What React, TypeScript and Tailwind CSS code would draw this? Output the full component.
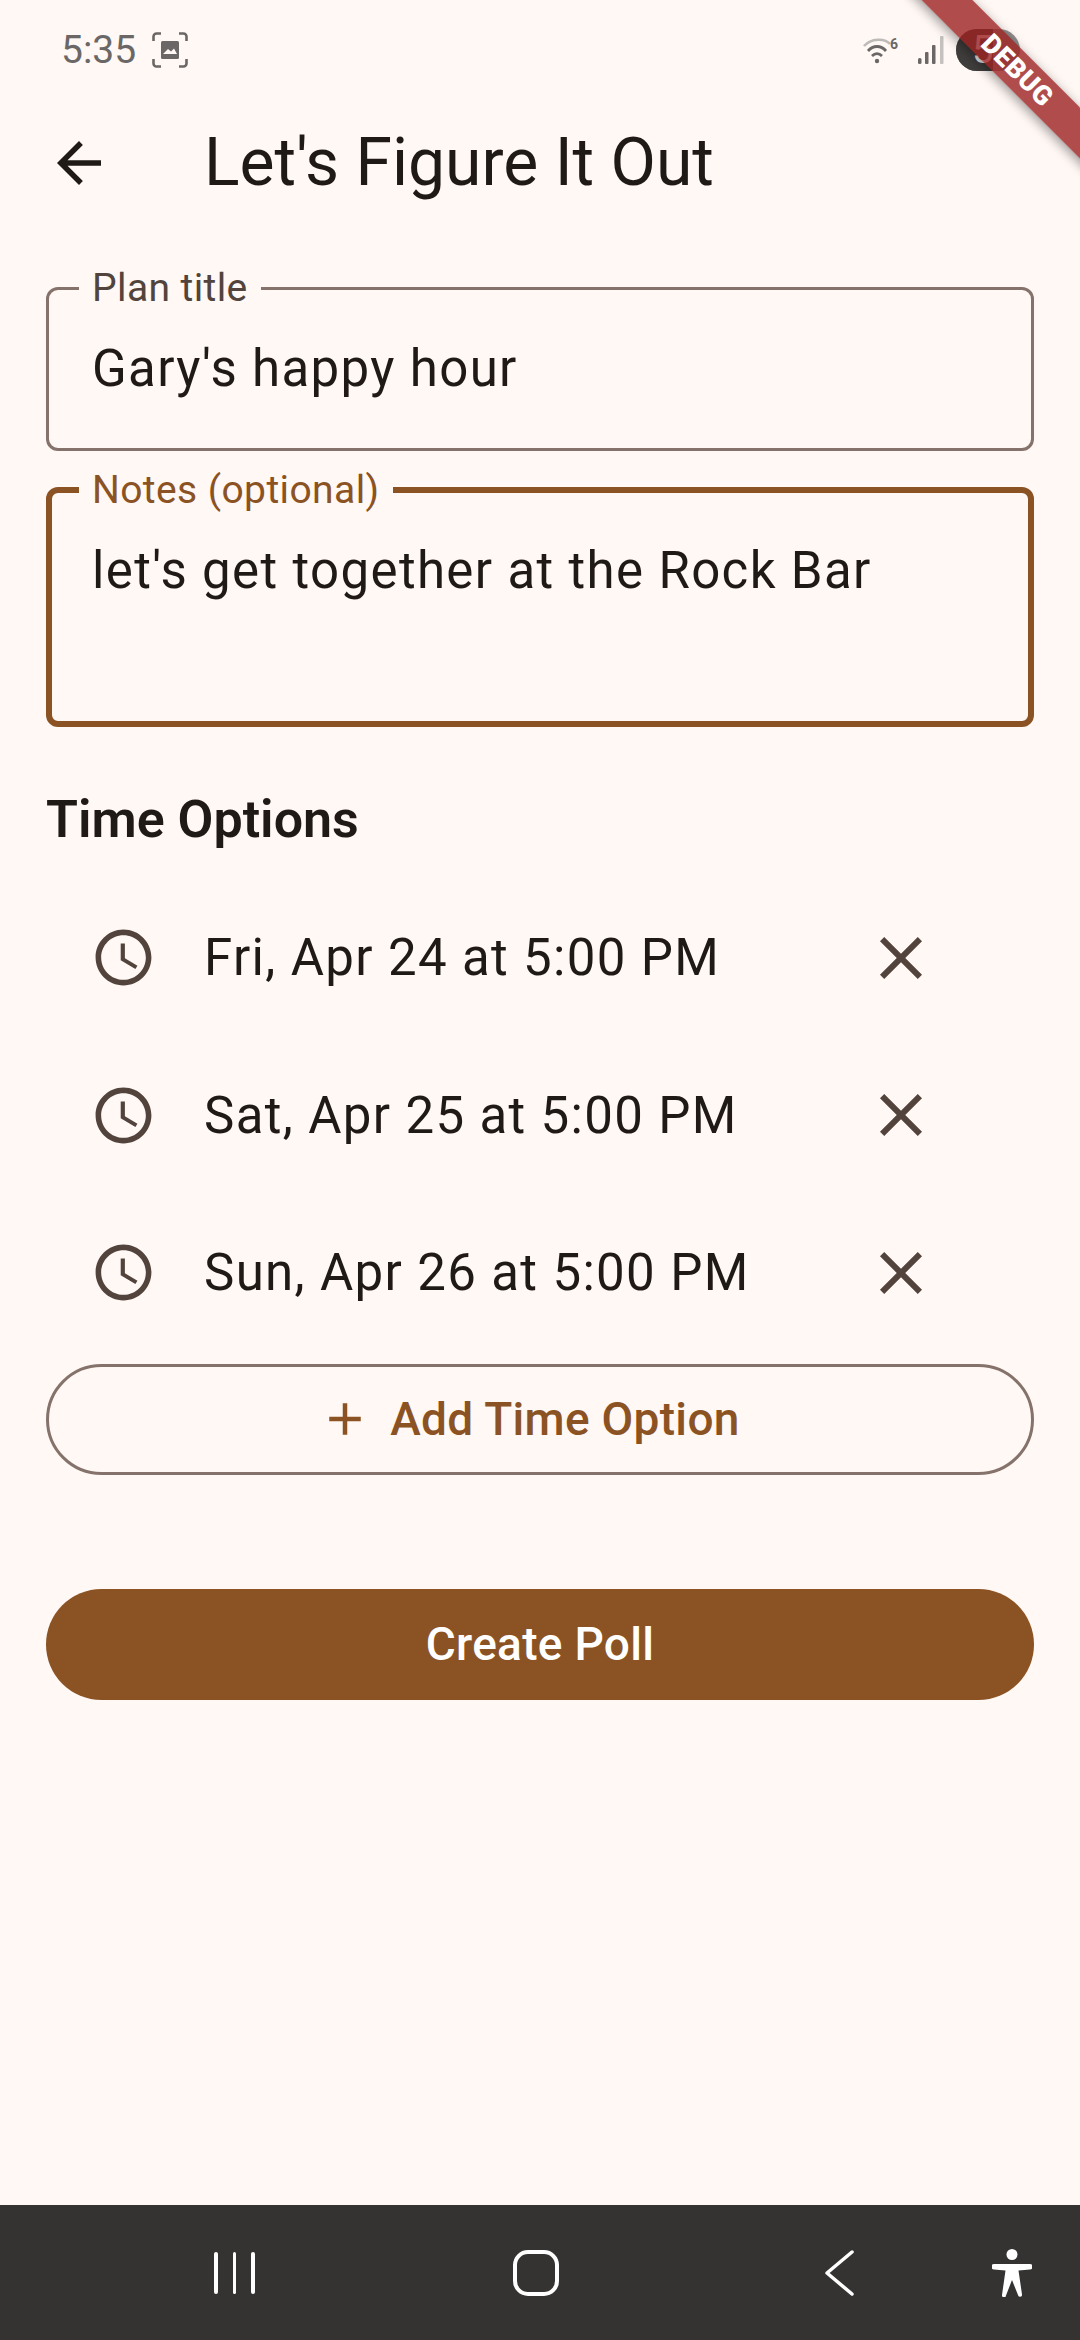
const timeOptions = [
  "Fri, Apr 24 at 5:00 PM",
  "Sat, Apr 25 at 5:00 PM",
  "Sun, Apr 26 at 5:00 PM",
];

function MaterialIcon({ d, className }: { d: string; className: string }) {
  return (
    <svg viewBox="0 0 24 24" fill="currentColor" className={className}>
      <path d={d} />
    </svg>
  );
}

function StatusBar() {
  return (
    <div className="flex h-[110px] shrink-0 items-center pb-[10px] text-[#6a6766]">
      <span className="ml-[61px] text-[39px] leading-none">5:35</span>
      <svg viewBox="0 0 36 36" className="ml-[16px] h-[36px] w-[36px]">
        <path
          d="M1.5 9V4.5a3 3 0 0 1 3-3H9M27 1.5h4.5a3 3 0 0 1 3 3V9M34.5 27v4.5a3 3 0 0 1-3 3H27M9 34.5H4.5a3 3 0 0 1-3-3V27"
          fill="none"
          stroke="currentColor"
          strokeWidth="2.6"
        />
        <path
          d="M9 10.5a1.5 1.5 0 0 1 1.500-1.500h15a1.500 1.500 0 0 1 1.500 1.500v15a1.500 1.500 0 0 1-1.500 1.500h-15a1.500 1.500 0 0 1-1.500-1.500z"
          fill="currentColor"
        />
        <path d="M11 22l5-5 3 2.500 3-3 3 5.500z" fill="#fff8f5" />
      </svg>
      <div className="ml-auto flex items-center">
        <svg viewBox="0 0 38 28" className="h-[28px] w-[38px]">
          <path d="M1 10C8 2 22 2 27 8" fill="none" stroke="#bdbab8" strokeWidth="2.600" />
          <path d="M5 15c5-6 13-6 18 0" fill="none" stroke="currentColor" strokeWidth="2.800" />
          <path d="M9 20c3-3 7-3 10 0" fill="none" stroke="currentColor" strokeWidth="2.800" />
          <circle cx="14" cy="25" r="2.200" fill="currentColor" />
          <text x="27" y="13" fontSize="14" fontWeight="700" fontFamily="Roboto, sans-serif" fill="currentColor">
            6
          </text>
        </svg>
        <svg viewBox="0 0 28 30" className="ml-[16px] h-[30px] w-[28px]">
          <rect x="1" y="23" width="3.500" height="6" rx="1.500" fill="currentColor" />
          <rect x="8" y="17" width="3.500" height="12" rx="1" fill="currentColor" />
          <rect x="15" y="10" width="3.500" height="19" rx="1" fill="currentColor" />
          <rect x="23" y="1" width="3.500" height="28" rx="1" fill="#c4c1bf" />
        </svg>
        <div className="relative ml-[11px] mr-[60px] flex h-[42px] w-[64px] items-center overflow-hidden rounded-full bg-[#8f8d8c]">
          <div className="h-full w-[37px] bg-[#3f3e3d]" />
          <span className="absolute left-[16px] text-[38px] leading-none text-[#f3eeeb]">5</span>
        </div>
      </div>
    </div>
  );
}

function OutlinedField({
  label,
  value,
  focused,
  className,
}: {
  label: string;
  value: string;
  focused?: boolean;
  className: string;
}) {
  return (
    <div
      className={`relative rounded-[12px] ${
        focused ? "border-[6px] border-[#8b5323]" : "border-[3px] border-[#85736b]"
      } ${className}`}
    >
      <span
        className={`absolute bg-[#fff8f5] px-[13px] text-[39px] leading-none tracking-[0.4px] ${
          focused
            ? "-top-[22px] left-[27px] text-[#8b5323]"
            : "-top-[21px] left-[30px] text-[#52443c]"
        }`}
      >
        {label}
      </span>
      <span className="block text-[51px] leading-none tracking-[1.35px] text-[#201a17]">{value}</span>
    </div>
  );
}

function NavBar() {
  return (
    <div className="mt-auto flex h-[135px] shrink-0 items-center bg-[#343331] text-white">
      <div className="ml-[214px] flex h-[42px] gap-[15px]">
        <div className="w-[3.500px] rounded-full bg-white" />
        <div className="w-[3.500px] rounded-full bg-white" />
        <div className="w-[3.500px] rounded-full bg-white" />
      </div>
      <div className="ml-[258px] h-[46px] w-[46px] rounded-[15px] border-[4px] border-white" />
      <svg viewBox="0 0 30 46" className="ml-[265px] h-[46px] w-[30px]">
        <path
          d="M28 2L3 23l25 21"
          fill="none"
          stroke="currentColor"
          strokeWidth="3.500"
          strokeLinecap="round"
          strokeLinejoin="round"
        />
      </svg>
      <svg viewBox="0 0 40 48" className="ml-[138px] h-[48px] w-[40px]">
        <ellipse cx="20" cy="5.500" rx="5.500" ry="5.500" fill="currentColor" />
        <path
          d="M2 15h36a2 2 0 0 1 0 5.500l-11.500 1 3.500 24a2 2 0 0 1-4 .5L20 31l-6 15.500a2 2 0 0 1-4-.5l3.500-24.500L2 20.500a2 2 0 0 1 0-5.500z"
          fill="currentColor"
        />
      </svg>
    </div>
  );
}

export default function App() {
  return (
    <div className="relative flex h-[2340px] w-[1080px] flex-col overflow-hidden bg-[#fff8f5] font-['Roboto',sans-serif]">
      <StatusBar />

      <div className="flex h-[106px] shrink-0 items-center">
        <MaterialIcon
          d="M20 11H7.830l5.590-5.590L12 4l-8 8 8 8 1.410-1.410L7.830 13H20v-2z"
          className="ml-[46px] h-[66px] w-[66px] text-[#201a17]"
        />
        <h1 className="ml-[92px] text-[66px] leading-none font-normal text-[#201a17]">
          Let's Figure It Out
        </h1>
      </div>

      <div className="flex flex-col px-[46px] pt-[71px]">
        <OutlinedField
          label="Plan title"
          value="Gary's happy hour"
          className="flex h-[164px] items-center pb-[2px] pl-[43px]"
        />
        <OutlinedField
          label="Notes (optional)"
          value="let's get together at the Rock Bar"
          focused
          className="mt-[36px] h-[240px] pt-[52px] pl-[40px]"
        />

        <h2 className="mt-[66px] h-[54px] text-[52px] leading-[54px] font-semibold text-[#201a17]">
          Time Options
        </h2>

        <div className="mt-[32px] flex flex-col">
          {timeOptions.map((option) => (
            <div key={option} className="flex h-[157.5px] items-center">
              <MaterialIcon
                d="M11.99 2C6.470 2 2 6.480 2 12s4.470 10 9.990 10C17.520 22 22 17.520 22 12S17.520 2 11.990 2zM12 20c-4.420 0-8-3.580-8-8s3.580-8 8-8 8 3.580 8 8-3.580 8-8 8zm.5-13H11v6l5.250 3.150.75-1.230-4.500-2.670z"
                className="ml-[44px] h-[67px] w-[67px] shrink-0 text-[#52443c]"
              />
              <span className="ml-[47px] w-[661px] text-[51px] leading-none tracking-[1.35px] text-[#201a17]">
                {option}
              </span>
              <MaterialIcon
                d="M19 6.410L17.590 5 12 10.590 6.410 5 5 6.410 10.590 12 5 17.590 6.410 19 12 13.410 17.590 19 19 17.590 13.410 12z"
                className="h-[72px] w-[72px] shrink-0 text-[#52443c]"
              />
            </div>
          ))}
        </div>

        <button className="mt-[12px] flex h-[111px] items-center justify-center rounded-full border-[3px] border-[#85736b] pr-[22px] text-[#8b5323]">
          <MaterialIcon d="M19 13h-6v6h-2v-6H5v-2h6V5h2v6h6v2z" className="h-[54px] w-[54px]" />
          <span className="ml-[18px] text-[46px] leading-none font-medium tracking-[0.3px]">
            Add Time Option
          </span>
        </button>

        <button className="mt-[114px] flex h-[111px] items-center justify-center rounded-full bg-[#8b5323] text-[46px] leading-none font-medium tracking-[0.3px] text-white">
          Create Poll
        </button>
      </div>

      <NavBar />

      <div className="absolute top-[48px] left-[813px] flex h-[36px] w-[400px] rotate-45 items-center justify-center bg-[#9c2222]/80 shadow-[0_3px_12px_rgba(0,0,0,0.4)]">
        <span className="ml-[12px] text-[27px] leading-none font-black tracking-[0.5px] text-white">DEBUG</span>
      </div>
    </div>
  );
}
